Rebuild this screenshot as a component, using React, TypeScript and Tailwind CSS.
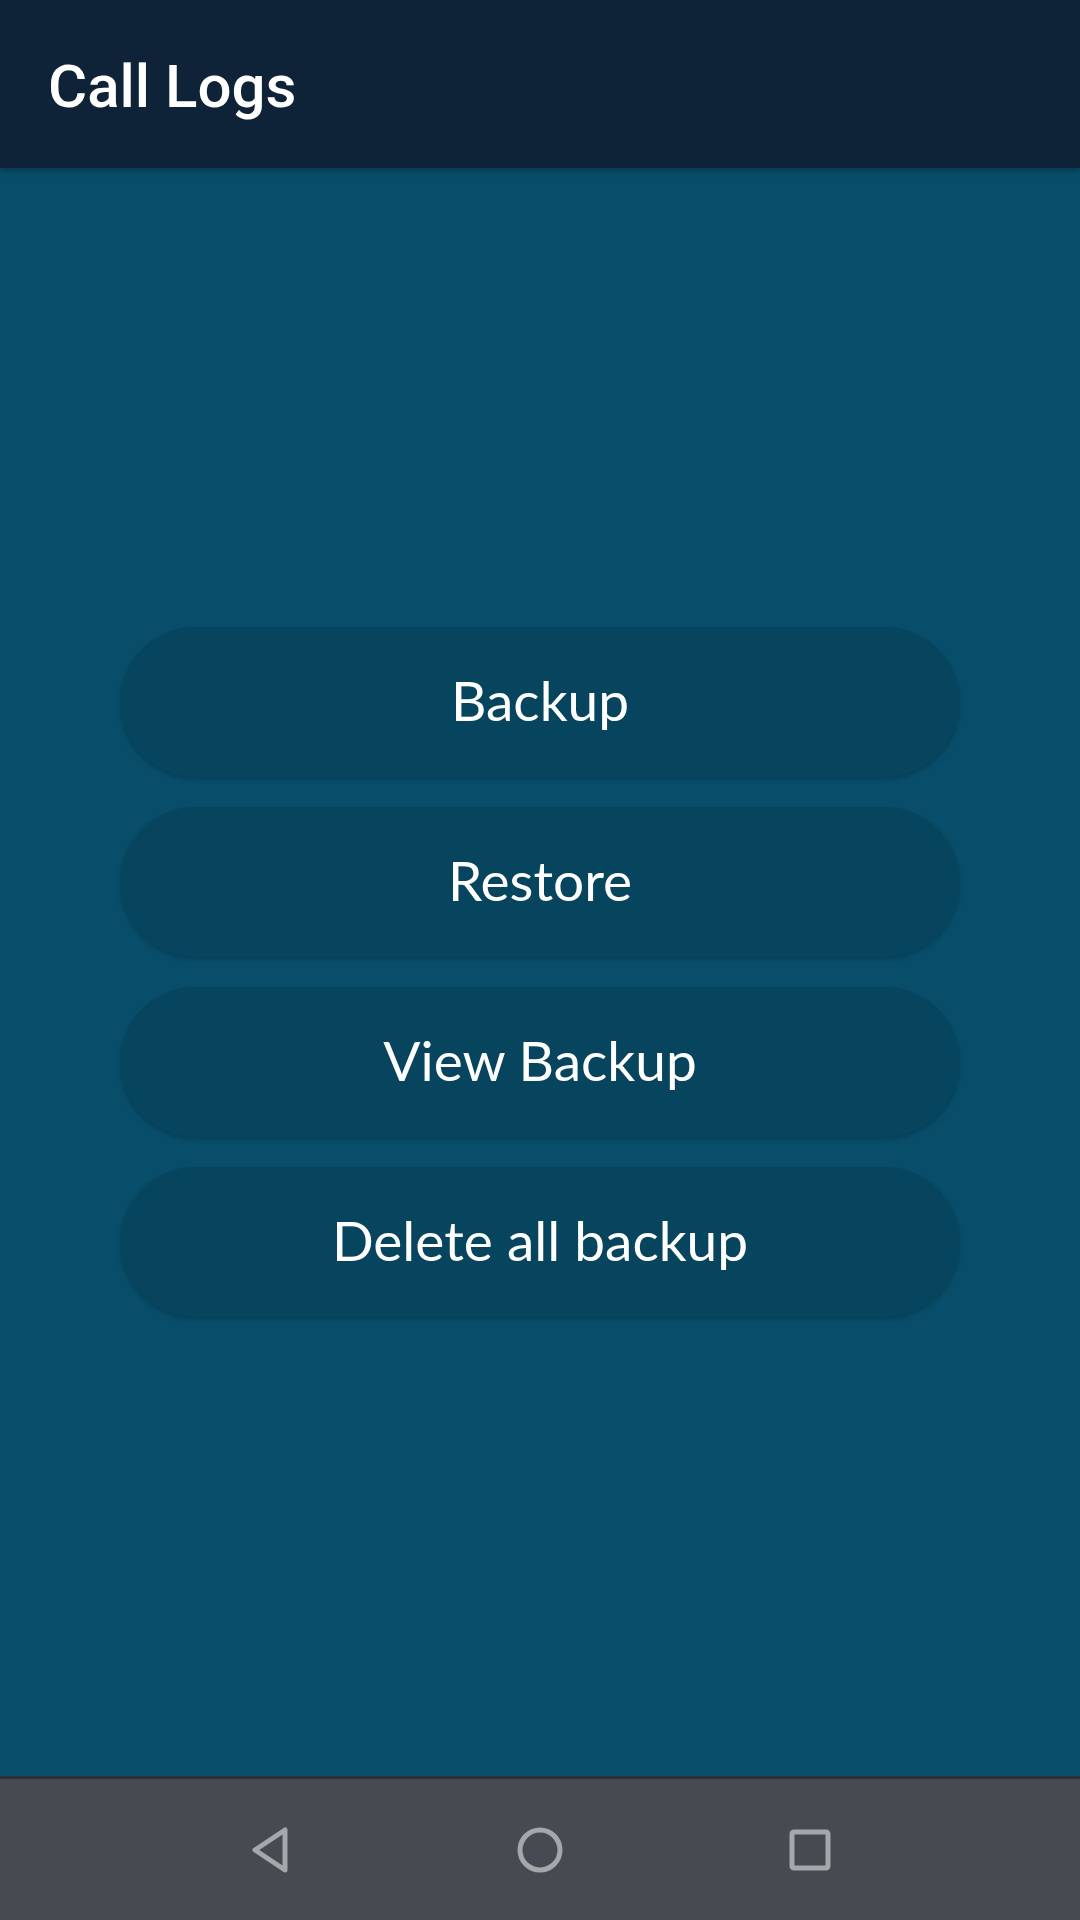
import React from "react";

const actions = ["Backup", "Restore", "View Backup", "Delete all backup"];

function NavBar() {
  return (
    <div className="h-[144px] shrink-0 bg-[#454b51] border-t-[3px] border-[#2c3135] flex items-center justify-center">
      <div className="w-[270px] flex justify-center">
        <svg width="48" height="48" viewBox="0 0 48 48" fill="none">
          <path d="M39 4 L39 44 L9 24 Z" stroke="#a4a8ab" strokeWidth="5" strokeLinejoin="round" />
        </svg>
      </div>
      <div className="w-[270px] flex justify-center">
        <svg width="48" height="48" viewBox="0 0 48 48" fill="none">
          <circle cx="24" cy="24" r="20" stroke="#a4a8ab" strokeWidth="5" />
        </svg>
      </div>
      <div className="w-[270px] flex justify-center">
        <svg width="48" height="48" viewBox="0 0 48 48" fill="none">
          <rect x="6" y="6" width="36" height="36" rx="2" stroke="#a4a8ab" strokeWidth="5" />
        </svg>
      </div>
    </div>
  );
}

export default function App() {
  return (
    <div className="w-[1080px] h-[1920px] flex flex-col bg-[#084e6b] overflow-hidden">
      {/* Toolbar */}
      <div className="relative z-10 h-[168px] shrink-0 bg-[#0e2238] px-[48px] flex items-center shadow-[0_3px_6px_rgba(0,0,0,0.25)]">
        <h1 className="mt-[5px] text-[60px] font-medium text-white font-['Roboto',sans-serif] leading-none">
          Call Logs
        </h1>
      </div>

      {/* Actions */}
      <div className="flex-1 flex flex-col items-center justify-center gap-[30px] px-[120px]">
        {actions.map((label) => (
          <button
            key={label}
            className="w-full h-[150px] pb-[4px] rounded-full bg-[#07445d] text-white text-[55px] font-['Lato',sans-serif] shadow-[0_3px_4px_rgba(0,0,0,0.18)]"
          >
            {label}
          </button>
        ))}
      </div>

      <NavBar />
    </div>
  );
}
